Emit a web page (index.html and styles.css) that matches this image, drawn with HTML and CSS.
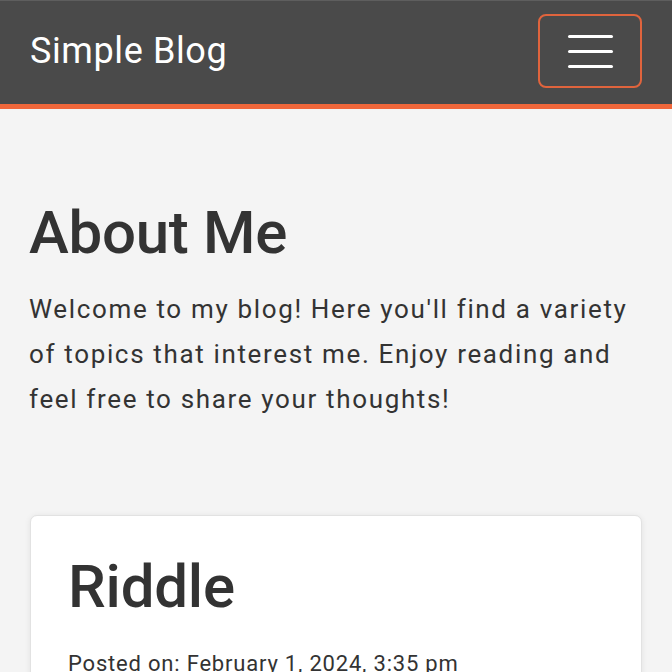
FILE: index.html
```html
<!DOCTYPE html>
<html lang="en">
<head>
<meta charset="utf-8">
<title>Simple Blog</title>
<link rel="stylesheet" href="styles.css">
</head>
<body>
<header class="site-header">
  <div class="brand">Simple Blog</div>
  <button class="menu-toggle" aria-label="Menu">
    <span class="bar"></span>
    <span class="bar"></span>
    <span class="bar"></span>
  </button>
</header>
<main class="content">
  <section class="about">
    <h1 class="about-title">About Me</h1>
    <p class="about-text">Welcome to my blog! Here you'll find a variety of topics that interest me. Enjoy reading and feel free to share your thoughts!</p>
  </section>
  <article class="post-card">
    <h2 class="post-title">Riddle</h2>
    <p class="post-meta">Posted on: February 1, 2024, 3:35 pm</p>
  </article>
</main>
</body>
</html>
```
FILE: styles.css
```css
* { box-sizing: border-box; }
html, body { margin: 0; padding: 0; }
body {
  background: #f4f4f4;
  font-family: Roboto, "Liberation Sans", sans-serif;
  color: #333;
  overflow: hidden;
}
.site-header {
  height: 109px;
  background: #4a4a4a;
  border-top: 1px solid #5e5e5e;
  border-bottom: 5px solid #f0673b;
  display: flex;
  align-items: center;
  justify-content: space-between;
  padding: 0 30px 4px 30px;
}
.brand {
  color: #fff;
  font-size: 36px;
  font-weight: 400;
  letter-spacing: 0.6px;
}
.menu-toggle {
  width: 104px;
  height: 74px;
  border: 2px solid #e0643d;
  border-radius: 8px;
  background: transparent;
  display: flex;
  flex-direction: column;
  align-items: center;
  justify-content: center;
  gap: 12px;
  padding: 0;
  margin-top: 1px;
}
.menu-toggle .bar {
  display: block;
  width: 45px;
  height: 3px;
  border-radius: 2px;
  background: #fff;
}
.content {
  padding: 88px 30px 0 29px;
}
.about-title {
  margin: 0;
  font-size: 60px;
  font-weight: 500;
  line-height: 72px;
  letter-spacing: -0.3px;
  color: #333;
}
.about-text {
  margin: 18px 0 0 0;
  font-size: 26px;
  line-height: 45px;
  letter-spacing: 1.65px;
  color: #333;
}
.post-card {
  margin-top: 93px;
  margin-left: 1px;
  background: #fff;
  border: 1px solid #e2e2e2;
  border-radius: 7px;
  box-shadow: 0 1px 6px rgba(0,0,0,0.08);
  padding: 35px 37px;
}
.post-title {
  margin: 0;
  font-size: 60px;
  font-weight: 500;
  line-height: 72px;
  letter-spacing: -0.2px;
  color: #333;
}
.post-meta {
  margin: 24px 0 0 0;
  font-size: 22px;
  line-height: 33px;
  letter-spacing: 0.8px;
  color: #333;
}
```
